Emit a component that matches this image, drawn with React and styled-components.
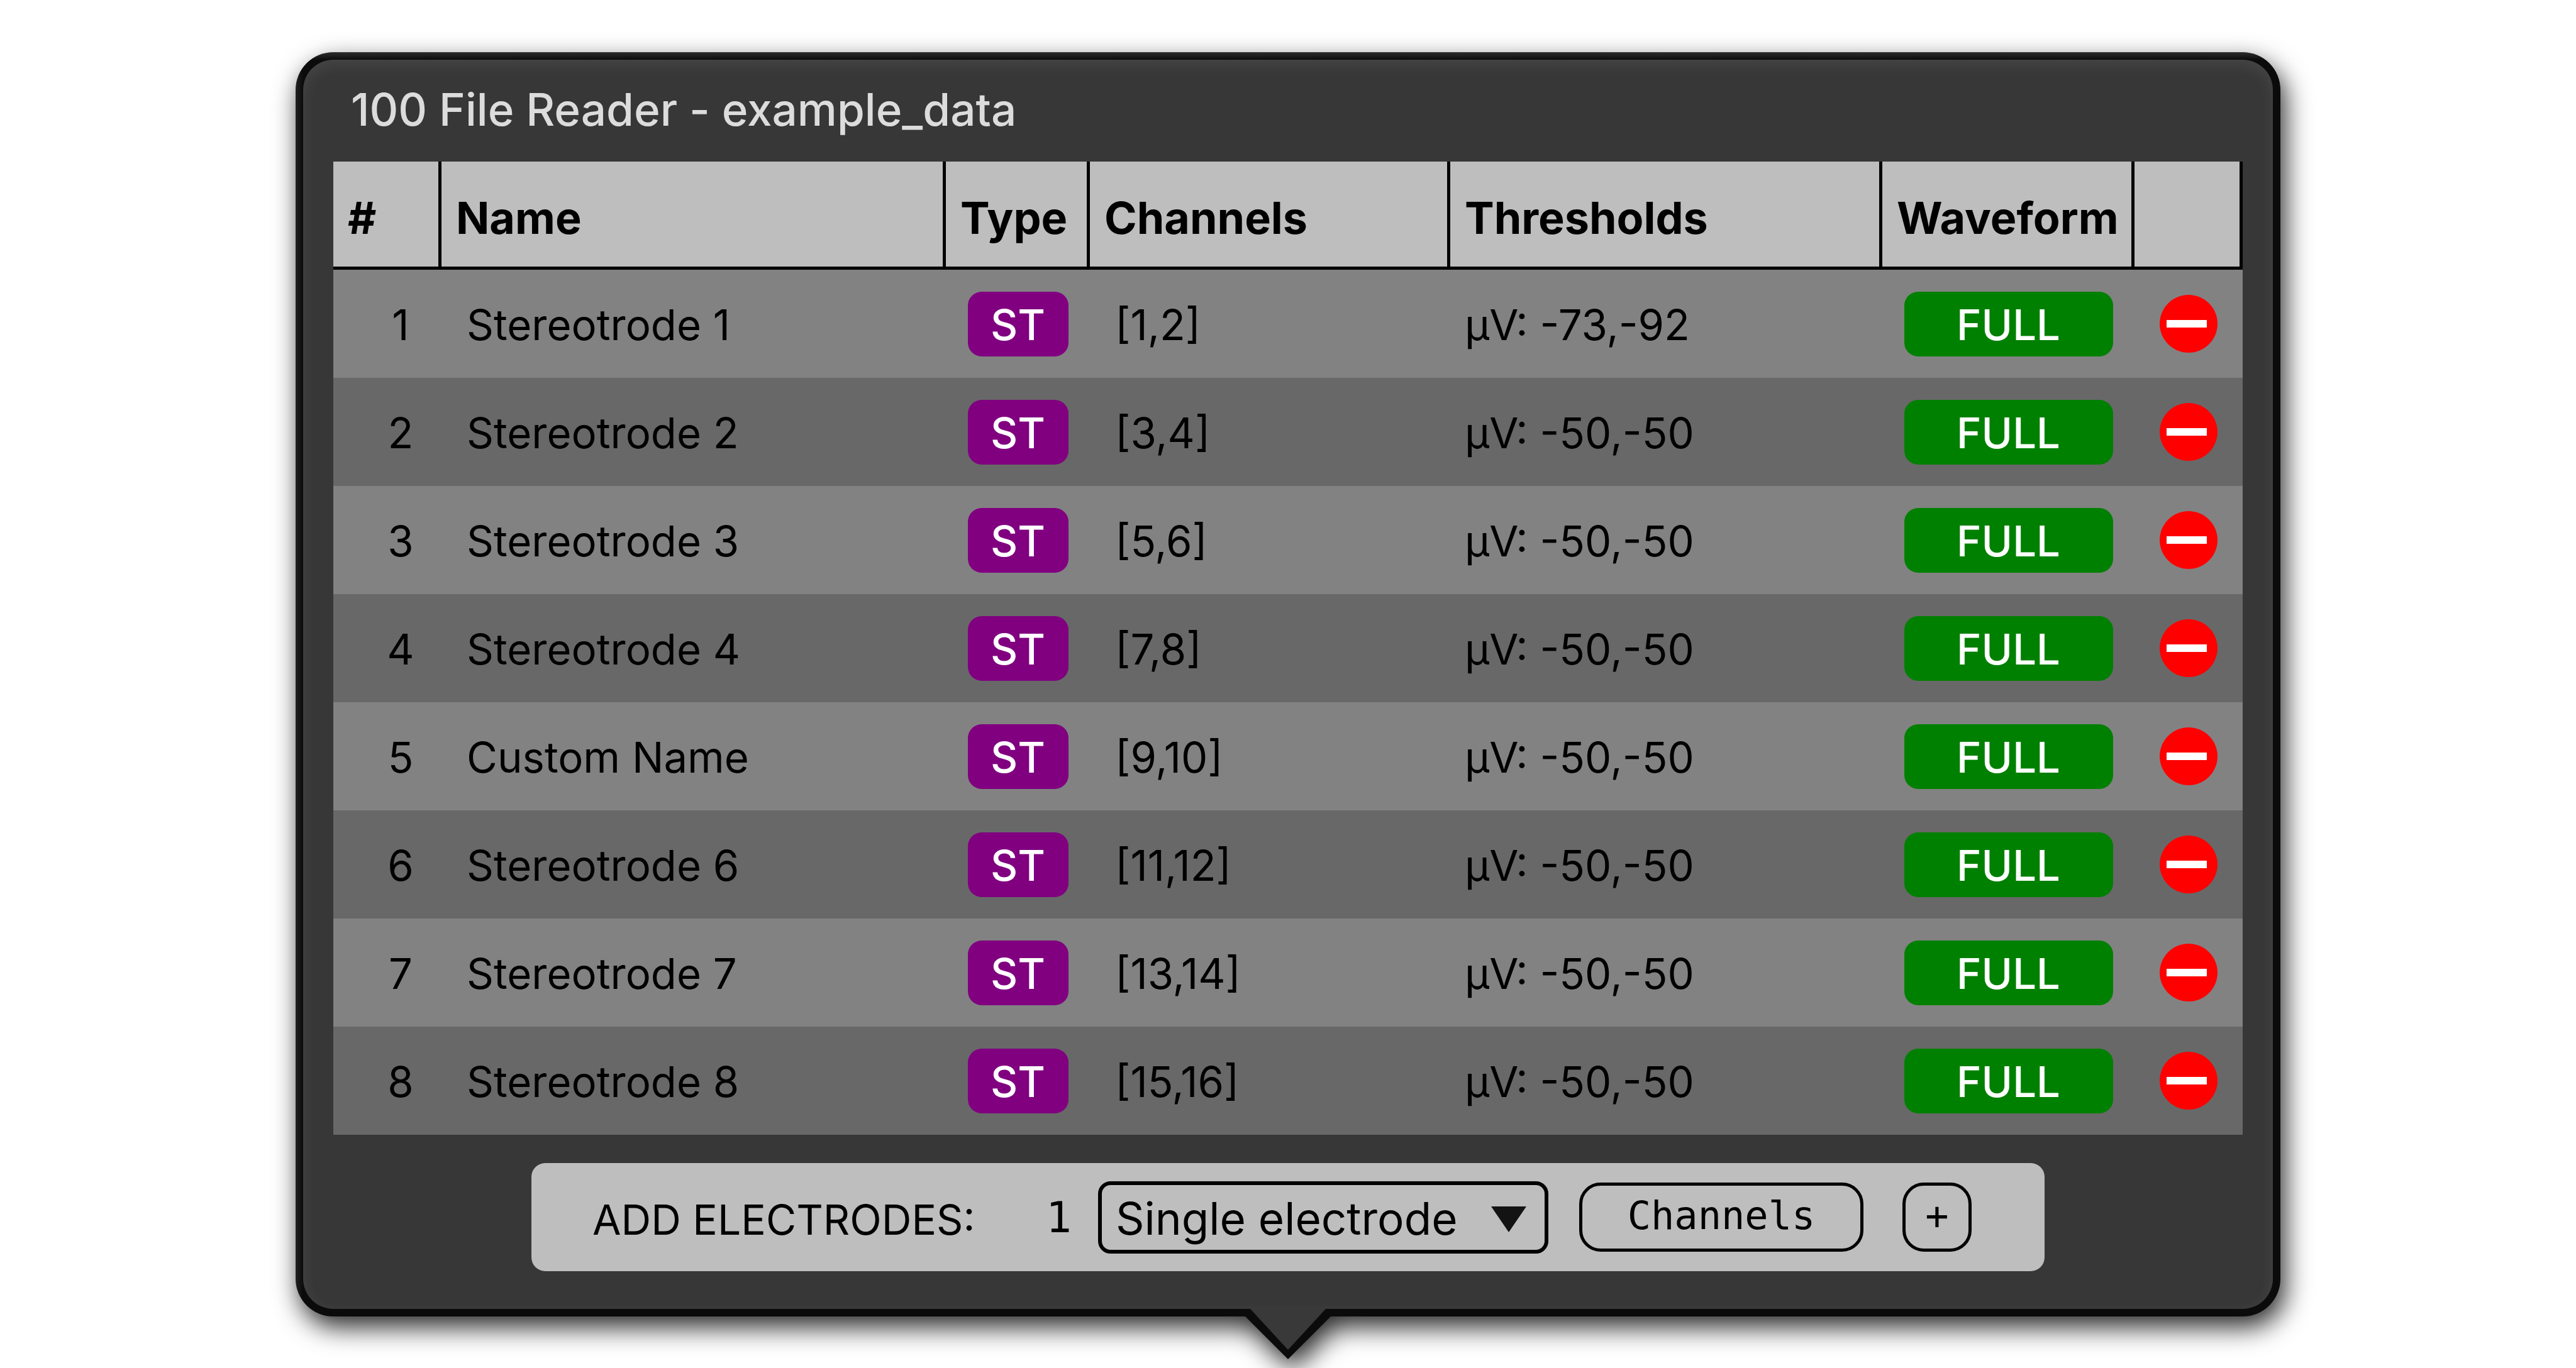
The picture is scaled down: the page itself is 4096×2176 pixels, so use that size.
import React, { useState } from "react";
import styled, { createGlobalStyle } from "styled-components";

const Global = createGlobalStyle`
  * { box-sizing: border-box; }
  html, body { margin: 0; background: #fff; }
  body { font-family: Inter, "Liberation Sans", sans-serif; color: #000; overflow: hidden; }
  button, input, select { font: inherit; color: inherit; margin: 0; }
`;

const Page = styled.main`
  padding: 83px 470px;
`;

const CallOut = styled.section`
  position: relative;
  padding: 0 48px 60px;
  border: 12px solid transparent;
  border-radius: 60px;
  background:
    linear-gradient(#373737, #373737) padding-box,
    linear-gradient(rgba(255, 255, 255, 0.14), transparent 12px) border-box,
    linear-gradient(90deg, rgba(255, 255, 255, 0.09), transparent 12px) border-box,
    linear-gradient(#0b0b0b, #0b0b0b) border-box;
  box-shadow: inset 0 8px 24px rgba(255, 255, 255, 0.08);
  filter: drop-shadow(7px 17px 21px rgba(0, 0, 0, 0.84));
`;

const Title = styled.h1`
  margin: 0;
  padding: 30px 28px 34px;
  font-size: 71px;
  line-height: 98px;
  font-weight: 500;
  color: #dcdcdc;
`;

const Table = styled.table`
  width: 100%;
  table-layout: fixed;
  border-collapse: separate;
  border-spacing: 0;
`;

const Col = styled.col`
  width: ${(p) => (p.$w ? p.$w + "px" : "auto")};
`;

const HeadCell = styled.th`
  height: 172px;
  padding: 12px 0 0 23px;
  border-right: 5px solid #000;
  border-bottom: 5px solid #000;
  background: #bebebe;
  font-size: 70px;
  line-height: 84px;
  font-weight: 650;
  text-align: left;
  white-space: nowrap;
`;

const Row = styled.tr`
  background: #828282;
  &:nth-child(even) { background: #686868; }
`;

const Cell = styled.td`
  height: 172px;
  padding: 4px 0 0 ${(p) => p.$pad || 40}px;
  font-size: 67px;
  line-height: 84px;
  text-align: ${(p) => (p.$center ? "center" : "left")};
  white-space: nowrap;
`;

const ControlCell = styled.td`
  height: 172px;
  padding: 0;
`;

const Centered = styled.div`
  display: flex;
  align-items: center;
  justify-content: center;
`;

const Badge = styled.button`
  width: ${(p) => p.$w}px;
  height: 103px;
  padding: 4px 0 0;
  border: 0;
  border-radius: 22px;
  background: ${(p) => p.$bg};
  color: #fff;
  font-size: 67px;
  line-height: 84px;
  font-weight: 500;
`;

const DeleteButton = styled.button`
  display: block;
  width: 92px;
  height: 92px;
  padding: 0;
  border: 0;
  background: none;
  svg { display: block; width: 100%; height: 100%; }
`;

const AddBar = styled.form`
  display: flex;
  align-items: center;
  width: 2406px;
  height: 172px;
  margin: 45px auto 0;
  padding: 0 116px 0 97px;
  border-radius: 22px;
  background: #bebebe;
`;

const AddLabel = styled.label`
  flex: 1;
  padding-top: 8px;
  font-size: 66px;
  line-height: 84px;
`;

const CountInput = styled.input`
  width: 60px;
  height: 110px;
  margin-right: 42px;
  padding: 0;
  border: 0;
  outline: 0;
  background: none;
  font-family: "DejaVu Sans Mono", monospace;
  font-size: 68px;
  text-align: right;
`;

const SelectWrap = styled.div`
  position: relative;
  width: 716px;
  margin-right: 49px;
`;

const Select = styled.select`
  display: block;
  appearance: none;
  width: 100%;
  height: 115px;
  padding: 4px 0 0 22px;
  border: 6px solid #000;
  border-radius: 20px;
  background: none;
  font-size: 71px;
`;

const Arrow = styled.svg`
  position: absolute;
  right: 35px;
  top: 40px;
  width: 56px;
  height: 41px;
  pointer-events: none;
`;

const ToolButton = styled.button`
  width: ${(p) => p.$w}px;
  height: 110px;
  margin-right: ${(p) => p.$gap || 0}px;
  padding: 0 0 4px;
  border: 5px solid #000;
  border-radius: 34px;
  background: none;
  font-family: "DejaVu Sans Mono", monospace;
  font-size: 62px;
  line-height: 84px;
`;

const Pointer = styled.svg`
  position: absolute;
  left: 50%;
  top: 100%;
  width: 136px;
  height: 80px;
  margin-left: -68px;
`;

const columns = [
  { label: "#", w: 172 },
  { label: "Name" },
  { label: "Type", w: 229 },
  { label: "Channels", w: 573 },
  { label: "Thresholds", w: 687 },
  { label: "Waveform", w: 401 },
  { label: "", w: 172 },
];

const electrodes = [
  ["Stereotrode 1", "[1,2]", "-73,-92"],
  ["Stereotrode 2", "[3,4]", "-50,-50"],
  ["Stereotrode 3", "[5,6]", "-50,-50"],
  ["Stereotrode 4", "[7,8]", "-50,-50"],
  ["Custom Name", "[9,10]", "-50,-50"],
  ["Stereotrode 6", "[11,12]", "-50,-50"],
  ["Stereotrode 7", "[13,14]", "-50,-50"],
  ["Stereotrode 8", "[15,16]", "-50,-50"],
];

function ElectrodeRow({ index, data }) {
  const [name, channels, thresholds] = data;
  return (
    <Row>
      <Cell $center $pad={42}>{index}</Cell>
      <Cell>{name}</Cell>
      <ControlCell>
        <Centered><Badge type="button" $w={160} $bg="#800080">ST</Badge></Centered>
      </ControlCell>
      <Cell>{channels}</Cell>
      <Cell $pad={23}>µV: {thresholds}</Cell>
      <ControlCell>
        <Centered><Badge type="button" $w={332} $bg="#008000">FULL</Badge></Centered>
      </ControlCell>
      <ControlCell>
        <Centered>
          <DeleteButton type="button" aria-label={"Delete " + name}>
            <svg viewBox="0 0 92 92">
              <circle cx="46" cy="46" r="46" fill="#f00" />
              <rect x="11" y="40" width="64" height="12" fill="#fff" />
            </svg>
          </DeleteButton>
        </Centered>
      </ControlCell>
    </Row>
  );
}

export default function App() {
  const [count, setCount] = useState("1");
  return (
    <>
      <Global />
      <Page>
        <CallOut>
          <Title>100 File Reader - example_data</Title>
          <Table>
            <colgroup>
              {columns.map((c, i) => <Col key={i} $w={c.w} />)}
            </colgroup>
            <thead>
              <tr>{columns.map((c, i) => <HeadCell key={i} scope="col">{c.label}</HeadCell>)}</tr>
            </thead>
            <tbody>
              {electrodes.map((e, i) => <ElectrodeRow key={i} index={i + 1} data={e} />)}
            </tbody>
          </Table>
          <AddBar onSubmit={(e) => e.preventDefault()}>
            <AddLabel htmlFor="count">ADD ELECTRODES:</AddLabel>
            <CountInput id="count" value={count} onChange={(e) => setCount(e.target.value)} />
            <SelectWrap>
              <Select aria-label="Electrode type" defaultValue="single">
                <option value="single">Single electrode</option>
                <option value="stereotrode">Stereotrode</option>
                <option value="tetrode">Tetrode</option>
              </Select>
              <Arrow viewBox="0 0 56 41"><path d="M0 0H56L28 41Z" fill="#131313" /></Arrow>
            </SelectWrap>
            <ToolButton type="button" $w={452} $gap={62}>Channels</ToolButton>
            <ToolButton type="submit" $w={110}>+</ToolButton>
          </AddBar>
          <Pointer viewBox="0 0 136 80">
            <path d="M0 12L8 0H128L136 12L68 80Z" fill="#0b0b0b" />
            <path d="M8 0H128L68 65Z" fill="#393939" />
          </Pointer>
        </CallOut>
      </Page>
    </>
  );
}
